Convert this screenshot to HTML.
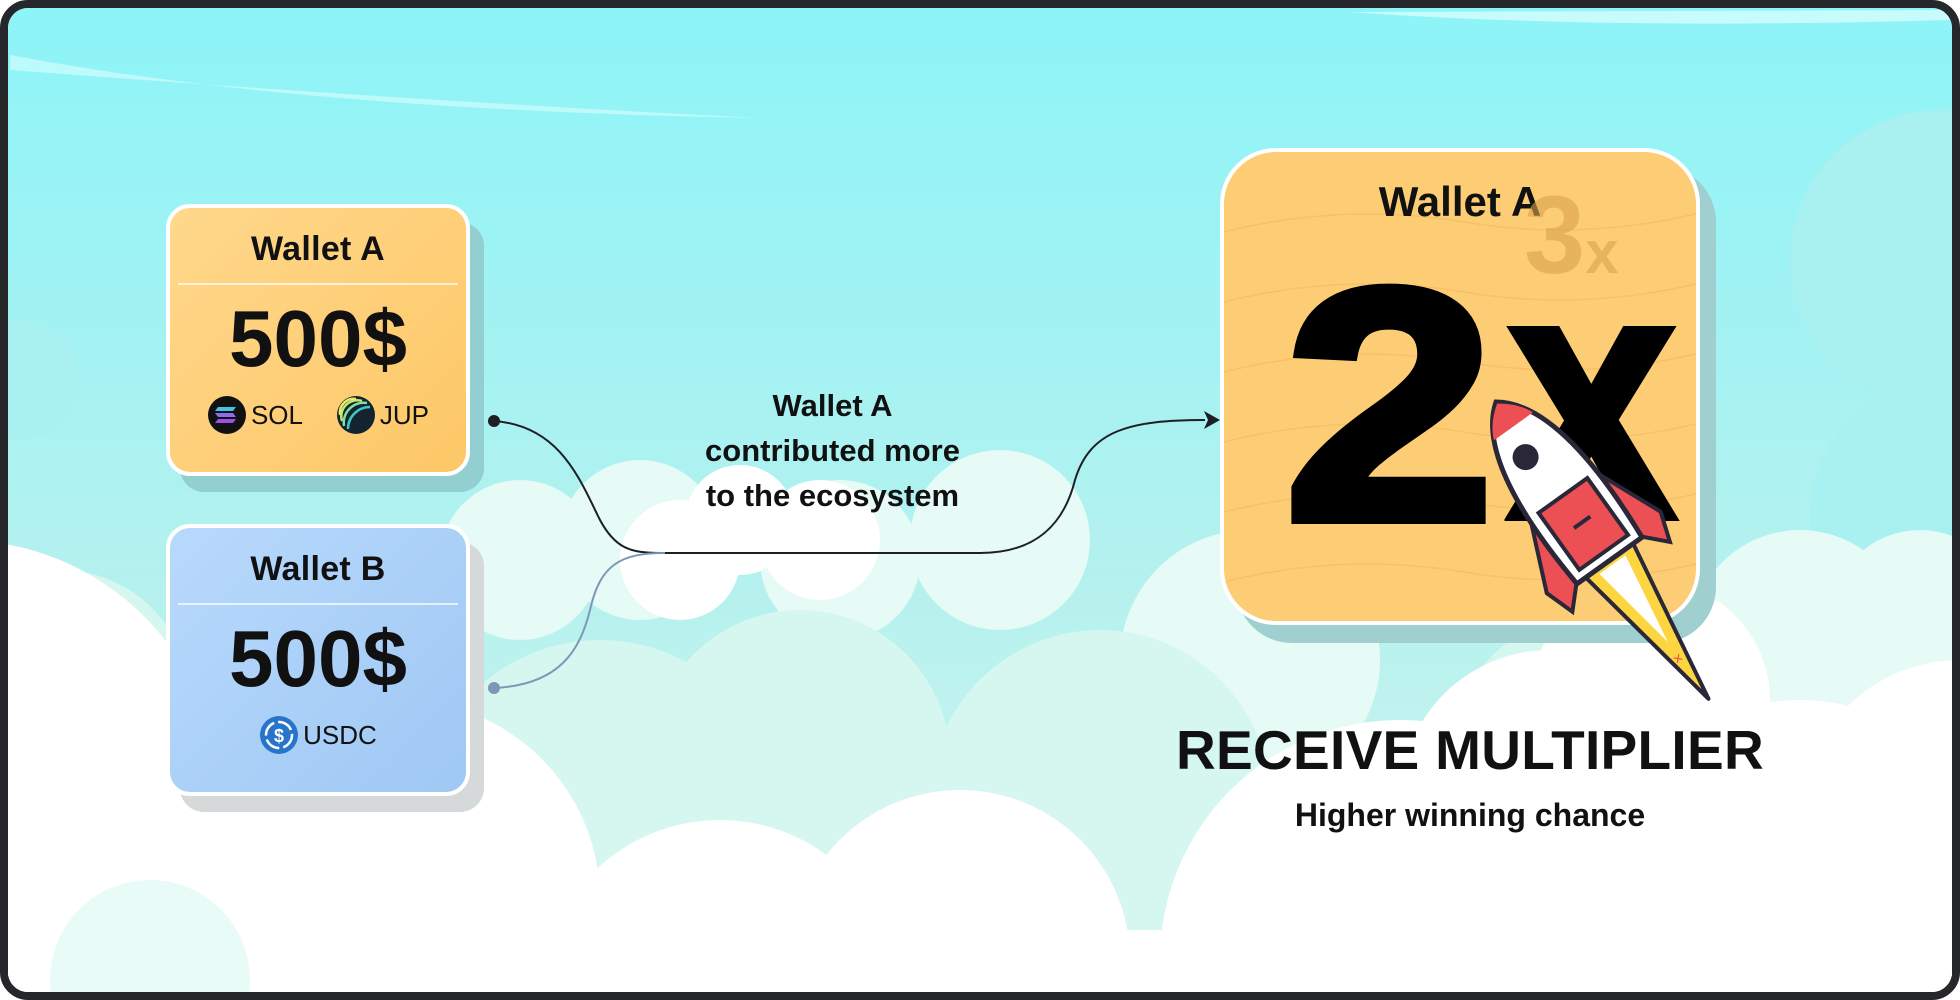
<!DOCTYPE html>
<html><head><meta charset="utf-8"><style>
html,body{margin:0;padding:0;width:1960px;height:1000px;overflow:hidden;background:#fff;font-family:"Liberation Sans",sans-serif;position:relative}
.frame{position:absolute;left:0;top:0;width:1960px;height:1000px;box-sizing:border-box;border:8px solid #25272b;border-radius:28px;overflow:hidden;background:#fff;}
.bg{position:absolute;left:-8px;top:-8px;}
.card{position:absolute;box-sizing:border-box;border:4px solid #fff;border-radius:24px;text-align:center;color:#111;}
.shadow{position:absolute;border-radius:24px;}
.title{font-size:34px;font-weight:bold;margin-top:22px;letter-spacing:0.3px}
.div{height:2px;background:rgba(255,255,255,.7);margin:14px 8px 0}
.amt{font-size:80px;font-weight:bold;margin-top:14px;line-height:80px}
.tok{font-size:26px;display:flex;justify-content:center;align-items:center;gap:4px;margin-top:16px}
.mid{position:absolute;left:652px;width:345px;top:375px;text-align:center;font-size:31px;font-weight:bold;line-height:45px;color:#111}
</style></head><body>
<div class="frame">
<svg class="bg" width="1960" height="1000" viewBox="0 0 1960 1000">
<defs><linearGradient id="sky" x1="0" y1="0" x2="0" y2="1"><stop offset="0" stop-color="#8cf4f8"/><stop offset="0.6" stop-color="#b6f1ee"/><stop offset="1" stop-color="#d6f7f1"/></linearGradient></defs>
<rect width="1960" height="1000" fill="url(#sky)"/>
<path d="M10 55 Q300 110 760 118 Q400 100 10 70Z" fill="#c8fbfb" opacity=".8"/>
<path d="M1350 12 Q1600 30 1950 20 L1950 10Z" fill="#d6fdfd" opacity=".8"/>
<g fill="#a9f0f0">
<circle cx="1940" cy="260" r="150"/><circle cx="1960" cy="520" r="150"/><circle cx="20" cy="380" r="60"/>
</g>
<g fill="#e6faf6">
<circle cx="520" cy="560" r="80"/><circle cx="640" cy="540" r="80"/><circle cx="840" cy="560" r="80"/><circle cx="1000" cy="540" r="90"/>
<circle cx="1250" cy="660" r="130"/><circle cx="1800" cy="640" r="110"/><circle cx="1920" cy="620" r="90"/>
</g>
<g fill="#d6f7f0">
<circle cx="60" cy="700" r="130"/><circle cx="600" cy="820" r="180"/><circle cx="800" cy="760" r="150"/>
<circle cx="1100" cy="800" r="170"/><circle cx="1600" cy="760" r="150"/><circle cx="130" cy="1000" r="110"/>
</g>
<g fill="#ffffff">
<circle cx="-40" cy="800" r="260"/><circle cx="400" cy="900" r="200"/><circle cx="720" cy="1000" r="180"/>
<circle cx="960" cy="960" r="170"/><circle cx="1400" cy="960" r="240"/><circle cx="1800" cy="900" r="200"/><circle cx="1960" cy="820" r="160"/>
<circle cx="1650" cy="700" r="120"/><circle cx="1550" cy="800" r="150"/>
<rect x="0" y="930" width="1960" height="70"/>
<circle cx="740" cy="520" r="55"/><circle cx="820" cy="540" r="60"/><circle cx="680" cy="560" r="60"/>
</g>
<circle cx="150" cy="980" r="100" fill="#e9fbf7"/>
<path d="M493 421 C560 425 580 480 600 520 C615 548 630 553 660 553 L980 553 C1040 553 1065 520 1075 480 C1090 430 1130 420 1205 420" fill="none" stroke="#1d1f24" stroke-width="2"/>
<path d="M1220 420 L1204 411 L1208 420 L1204 429Z" fill="#1d1f24"/>
<circle cx="494" cy="421" r="6" fill="#1d1f24"/>
<path d="M494 688 C560 685 580 650 590 610 C600 565 620 553 665 553" fill="none" stroke="#7c98b8" stroke-width="2"/>
<circle cx="494" cy="688" r="6" fill="#7c98b8"/>
</svg>

<div class="shadow" style="left:172px;top:214px;width:304px;height:270px;background:#93cfd0"></div>
<div class="card" style="left:158px;top:196px;width:304px;height:272px;background:linear-gradient(135deg,#ffd88c,#fdc766)">
<div class="title">Wallet A</div><div class="div"></div><div class="amt">500$</div>
<div class="tok"><svg width="40" height="40" viewBox="0 0 40 40"><circle cx="20" cy="20" r="19" fill="#111"/><path d="M11 12h18l-3 4H8z" fill="#44c4e4"/><path d="M8 18h18l3 4H11z" fill="#8a6ee8"/><path d="M11 24h18l-3 4H8z" fill="#a04fe6"/></svg>SOL&nbsp;&nbsp;&nbsp;&nbsp;<svg width="40" height="40" viewBox="0 0 40 40"><circle cx="20" cy="20" r="19" fill="#13232f"/><g fill="none" stroke-width="2.5"><path d="M6 26 A16 16 0 0 1 26 6" stroke="#c6e76a"/><path d="M8 31 A20 20 0 0 1 31 8" stroke="#7fe0a6"/><path d="M12 34 A22 22 0 0 1 34 12" stroke="#3fc7c1"/><path d="M4 20 A14 14 0 0 1 20 4" stroke="#e6ec6a"/></g></svg>JUP</div>
</div>

<div class="shadow" style="left:172px;top:534px;width:304px;height:270px;background:#d5d9da"></div>
<div class="card" style="left:158px;top:516px;width:304px;height:272px;background:linear-gradient(135deg,#b8d9fc,#9fc8f4)">
<div class="title">Wallet B</div><div class="div"></div><div class="amt">500$</div>
<div class="tok"><svg width="40" height="40" viewBox="0 0 40 40"><circle cx="20" cy="20" r="19" fill="#2775ca"/><circle cx="20" cy="20" r="13" fill="none" stroke="#fff" stroke-width="2.5" stroke-dasharray="16 4"/><text x="20" y="27" font-size="18" font-weight="bold" fill="#fff" text-anchor="middle" font-family="Liberation Sans">$</text></svg>USDC</div>
</div>

<div class="mid">Wallet A<br>contributed more<br>to the ecosystem</div>

<div class="shadow" style="left:1228px;top:158px;width:480px;height:477px;border-radius:56px;background:#9fcfcf"></div>
<div class="card" style="left:1212px;top:140px;width:480px;height:477px;border-radius:56px;background:#fdcd76;overflow:hidden">
<svg style="position:absolute;left:0;top:0" width="480" height="480"><g fill="none" stroke="#f5b85e" stroke-width="1.5" opacity=".6">
<path d="M0 80 Q120 50 240 70 T480 60"/><path d="M0 150 Q120 120 240 140 T480 130"/><path d="M0 220 Q120 190 240 210 T480 200"/><path d="M0 290 Q120 260 240 280 T480 270"/><path d="M0 360 Q120 330 240 350 T480 340"/><path d="M0 430 Q120 400 240 420 T480 410"/></g></svg>
<div style="position:absolute;left:0;right:0;top:26px;font-size:42px;font-weight:bold;text-align:center;color:#111">Wallet A</div>
<div style="position:absolute;left:300px;top:20px;font-size:110px;color:#d9a44e;opacity:.6;font-weight:bold">3<span style="font-size:60px">x</span></div>
</div>
<div style="position:absolute;left:1276px;top:197px;font-size:330px;font-weight:bold;color:#000;line-height:400px;-webkit-text-stroke:10px #000;transform:scaleX(1.15);transform-origin:left top">2</div>
<div style="position:absolute;left:1500px;top:188px;font-size:354px;font-weight:bold;color:#000;line-height:400px;-webkit-text-stroke:8px #000;transform:scaleX(0.85);transform-origin:left top">x</div>
</div>
<svg style="position:absolute;left:0;top:0" width="1960" height="1000" viewBox="0 0 1960 1000">
<g transform="translate(1496,402) rotate(-35.6)">
<path d="M-30 190 L0 365 L30 190Z" fill="#fcd540" stroke="#2a2838" stroke-width="4" stroke-linejoin="round"/>
<path d="M-16 200 L0 295 L16 200Z" fill="#fff"/>
<path d="M-38 110 L-70 185 L-60 215 L-36 190Z" fill="#ec4f54" stroke="#2a2838" stroke-width="4"/>
<path d="M38 110 L70 185 L60 215 L36 190Z" fill="#ec4f54" stroke="#2a2838" stroke-width="4"/>
<path d="M0 0 C35 25 48 90 40 195 L-40 195 C-48 90 -35 25 0 0Z" fill="#fff" stroke="#2a2838" stroke-width="5"/>
<path d="M0 2 C12 10 20 20 24 30 L-24 30 C-20 20 -12 10 0 2Z" fill="#ec4f54"/>
<rect x="-30" y="115" width="60" height="70" fill="#ec4f54" stroke="#2a2838" stroke-width="4"/>
<line x1="-10" y1="148" x2="10" y2="148" stroke="#2a2838" stroke-width="4"/>
<circle cx="-8" cy="62" r="13" fill="#2a2838"/>
<text x="-6" y="320" fill="#ec4f54" font-size="16">×</text>
</g>
</svg>

<div style="position:absolute;left:1100px;width:740px;top:718px;text-align:center;font-size:55px;font-weight:bold;color:#111;letter-spacing:0.3px">RECEIVE MULTIPLIER</div>
<div style="position:absolute;left:1100px;width:740px;top:797px;text-align:center;font-size:32px;font-weight:bold;color:#111">Higher winning chance</div>
</body></html>
